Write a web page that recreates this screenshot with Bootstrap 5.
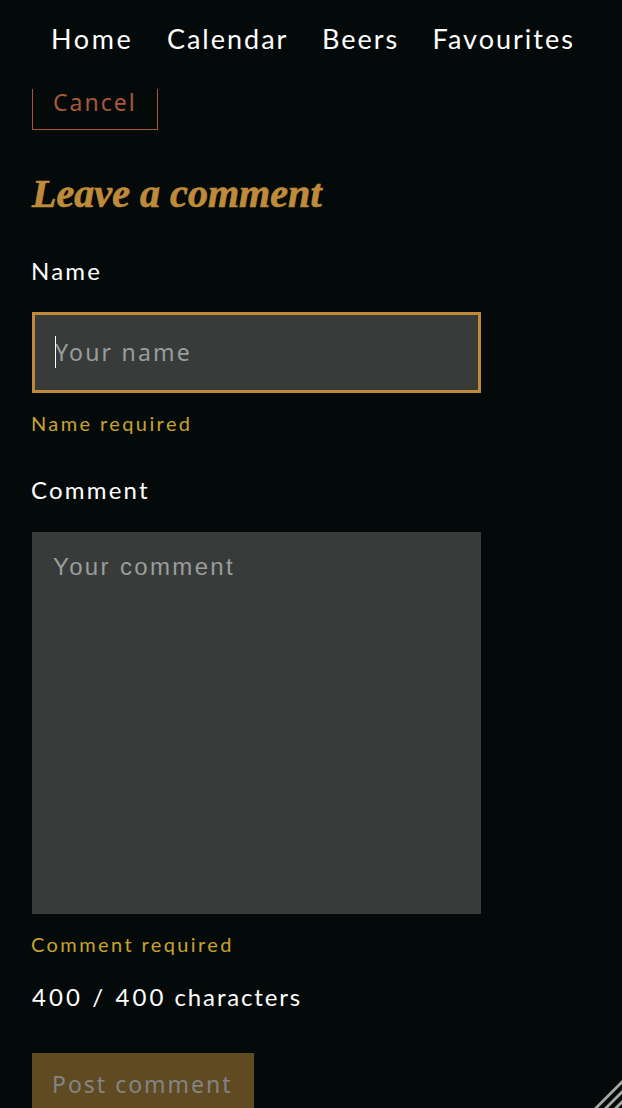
<!DOCTYPE html>
<html lang="en">
<head>
<meta charset="utf-8">
<meta name="viewport" content="width=device-width, initial-scale=1">
<title>Leave a comment</title>
<link href="https://cdn.jsdelivr.net/npm/bootstrap@5.3.0/dist/css/bootstrap.min.css" rel="stylesheet">
<style>
html, body { height: 100%; }
body { background: #040a09; color: #fff; font-family: Lato, sans-serif; font-size: 24px; line-height: 32px; }
.site-nav { height: 89px; padding: 0 0 11px 51px; gap: 33.5px; font-size: 27px; letter-spacing: 2px; }
.site-nav .nav-link { color: #fff; line-height: 36px; white-space: nowrap; }
.site-nav .nav-home { letter-spacing: 2.6px; }
.page { padding-left: 32px; }
.btn-site { border-radius: 0; font-family: "Noto Sans", sans-serif; font-size: 23px; line-height: 32px; letter-spacing: 2px; text-align: left; white-space: nowrap; }
.btn-cancel, .btn-cancel:hover { width: 126px; height: 41px; padding: 0 20px 16px; border: 1px solid #a85838; border-top: 0; color: #a85838; line-height: 26px; }
.script-title { margin: 40px 0 0; height: 48px; color: #bf8b3a; font: italic 700 40px/48px "Liberation Serif", serif; letter-spacing: .05px; white-space: nowrap; -webkit-text-stroke: .7px #bf8b3a; }
.field { width: 449px; border-radius: 0; background: #383b3a; color: #fff; resize: none; }
.field::placeholder { color: #999d9c; opacity: 1; }
.field-name { margin-top: 25px; height: 81px; border: 3px solid #bf8b3a; padding: 0 20px 2px; font: 23px/32px "Noto Sans", sans-serif; letter-spacing: 2.2px; }
.field-comment { margin-top: 26px; height: 382px; border: 0; padding: 19px 21px; font: 24px/32px "Liberation Sans", sans-serif; letter-spacing: 2.35px; }
.caret { left: 55px; top: 336px; width: 1px; height: 32px; background: #fff; }
.text-line { display: block; margin-left: -1px; letter-spacing: 2.2px; white-space: nowrap; }
.label-name { margin-top: 37px; }
.label-comment { margin-top: 37px; }
.hint { margin-top: 16px; color: #c9a32f; font-size: 20px; line-height: 28px; letter-spacing: 2.4px; }
.counter { margin: 23px 0 0; letter-spacing: 1.85px; }
.counter-value { letter-spacing: 3.1px; }
.btn-post, .btn-post:disabled { margin-top: 40px; width: 222px; height: 72px; padding: 0 20px 10px; border: 0; background: #604a22; color: #828584; opacity: 1; line-height: 62px; }
.grip { right: 0; bottom: 0; }
</style>
</head>
<body class="overflow-hidden position-relative">
<nav class="site-nav d-flex align-items-center">
  <a class="nav-link nav-home" href="#">Home</a>
  <a class="nav-link" href="#">Calendar</a>
  <a class="nav-link" href="#">Beers</a>
  <a class="nav-link" href="#">Favourites</a>
</nav>
<main class="page d-flex flex-column align-items-start">
  <button type="button" class="btn btn-site btn-cancel">Cancel</button>
  <h2 class="script-title">Leave a comment</h2>
  <label class="text-line label-name" for="name">Name</label>
  <input id="name" class="form-control field field-name" placeholder="Your name">
  <div class="text-line hint">Name required</div>
  <label class="text-line label-comment" for="comment">Comment</label>
  <textarea id="comment" class="form-control field field-comment" placeholder="Your comment"></textarea>
  <div class="text-line hint">Comment required</div>
  <div class="text-line counter"><span class="counter-value">400 / 400</span> characters</div>
  <button type="button" class="btn btn-site btn-post" disabled>Post comment</button>
</main>
<span class="caret position-absolute"></span>
<svg class="grip position-fixed" width="28" height="28" viewBox="0 0 28 28" fill="none" stroke="#aaa8a7" stroke-width="2.8"><path d="M0 30 30 0M10 30 30 10M20 30 30 20"/></svg>
<script src="https://cdn.jsdelivr.net/npm/bootstrap@5.3.0/dist/js/bootstrap.bundle.min.js"></script>
</body>
</html>
